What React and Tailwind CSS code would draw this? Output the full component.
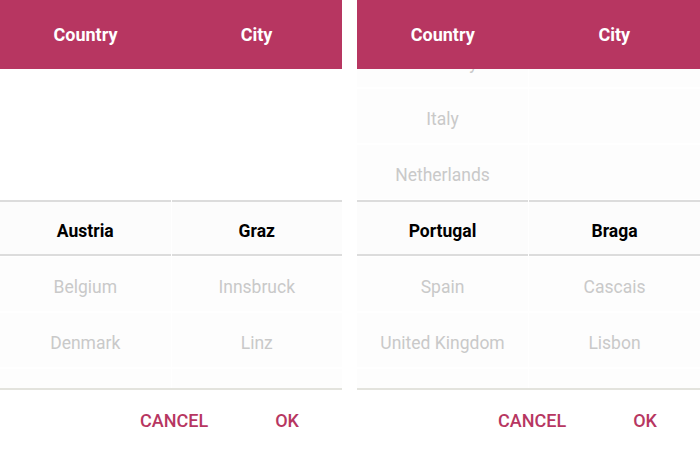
import React from "react";

const leftCountries = ["Austria", "Belgium", "Denmark", ""];
const leftCities = ["Graz", "Innsbruck", "Linz", ""];
const rightCountries = ["Germany", "Italy", "Netherlands", "Portugal", "Spain", "United Kingdom", ""];
const rightCities = ["", "", "", "Braga", "Cascais", "Lisbon", ""];

function Column({ items, selected }) {
  return (
    <div className="flex flex-col">
      {items.map((t, i) => (
        <div
          key={i}
          className={
            i === selected
              ? "h-[56px] flex items-center justify-center pt-[6px] border-y-2 border-[#dcdcdc] bg-[#fcfcfc] text-[17.5px] font-bold text-black"
              : "h-[56px] flex items-center justify-center pt-[7px] text-[17.5px] text-[#c9c9c9] bg-[#fdfdfd] border-y border-white"
          }
        >
          {t}
        </div>
      ))}
    </div>
  );
}

function Panel({ countries, cities, selected, offset, wide }) {
  return (
    <div className={`flex flex-col h-[450px] ${wide ? "w-[343px]" : "w-[342px]"} bg-white`}>
      <div className="h-[69px] shrink-0 bg-[#b73661] grid grid-cols-2 items-center text-white text-[18px] font-bold">
        <div className="text-center">Country</div>
        <div className="text-center">City</div>
      </div>
      <div className="flex-1 overflow-hidden">
        <div className={`grid grid-cols-2 gap-x-px ${offset}`}>
          <Column items={countries} selected={selected} />
          <Column items={cities} selected={selected} />
        </div>
      </div>
      <div className="h-[62px] shrink-0 border-t-2 border-[#e3e3dd] flex items-center justify-end pr-[43px] gap-[67px] text-[18px] font-medium text-[#b73661]">
        <span>CANCEL</span>
        <span>OK</span>
      </div>
    </div>
  );
}

export default function App() {
  return (
    <div
      className="w-[700px] h-[450px] bg-white flex justify-between overflow-hidden"
      style={{ fontFamily: "Roboto, 'Noto Sans', sans-serif" }}
    >
      <Panel countries={leftCountries} cities={leftCities} selected={0} offset="mt-[131px]" />
      <Panel countries={rightCountries} cities={rightCities} selected={3} offset="-mt-[37px]" wide />
    </div>
  );
}
